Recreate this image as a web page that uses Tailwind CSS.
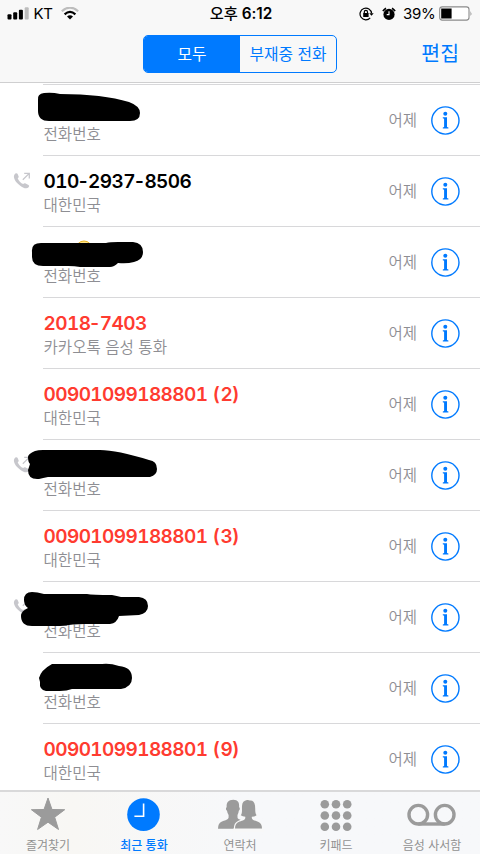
<!DOCTYPE html>
<html lang="ko">
<head>
<meta charset="utf-8">
<title>최근 통화</title>
<script src="https://cdn.jsdelivr.net/npm/@tailwindcss/browser@4"></script>
</head>
<body class="w-[480px] h-[854px] overflow-hidden bg-white font-['Inter','Noto_Sans_CJK_KR',sans-serif] text-black flex flex-col">
<header class="h-[83px] shrink-0 bg-[#f8f8f8] border-b border-[#cfcfd0]">
  <div class="h-[27px] grid grid-cols-3 items-center text-[15px] leading-[27px]">
    <div class="flex items-center pl-[7px]">
      <svg class="w-[22px] h-[13px]" viewBox="0 0 22 13"><rect x=".5" y="7.3" width="4" height="5.2" rx="1"/><rect x="6.2" y="5.3" width="4" height="7.2" rx="1"/><rect x="11.9" y="2.8" width="4" height="9.7" rx="1"/><rect x="17.7" y=".3" width="4" height="12.2" rx="1" fill="#bdbdbd"/></svg>
      <span class="ml-[4.5px] w-[20px] tracking-[-0.3px]">KT</span>
      <svg class="ml-[7px] w-[18px] h-[13px]" viewBox="0 0 18 13" fill="none"><path d="M.8 4.3Q9-3 17.2 4.3" stroke="#bdbdbd" stroke-width="2.2"/><path d="M3.6 7.3Q9 2.6 14.4 7.3" stroke="#000" stroke-width="2.2"/><path d="M6 9.5Q9 6.9 12 9.5L9 12.6Z" fill="#000"/></svg>
    </div>
    <div class="text-center font-semibold whitespace-nowrap text-[15.3px] pl-[2px]"><span class="font-medium">오후</span> 6:12</div>
    <div class="flex items-center justify-end pr-[7px]">
      <svg class="w-[15px] h-[14px]" viewBox="0 0 15 14" fill="none" stroke="#000" stroke-width="1.2"><path d="M11.2 10.8A5.8 5.8 0 1 1 12.6 6.4"/><path d="M10.3 6.2h4.4l-2.2 2.6z" fill="#000" stroke="none"/><rect x="4.2" y="6" width="5.4" height="4" fill="#000" stroke="none"/><path d="M5.3 6.2V5a1.6 1.6 0 0 1 3.2 0v1.2"/></svg>
      <svg class="ml-[8px] w-[14px] h-[14px]" viewBox="0 0 14 14"><circle cx="7" cy="7.4" r="5.6"/><path d="M.9 4.2A8 8 0 0 1 4 1.2M13.1 4.2A8 8 0 0 0 10 1.2" stroke="#000" stroke-width="1.6" fill="none"/><path d="M7 4.3v3.3H4.7" stroke="#fff" stroke-width="1.1" fill="none"/></svg>
      <span class="ml-[7px] w-[32px] tracking-[-0.3px] whitespace-nowrap">39%</span>
      <svg class="ml-[4px] w-[34px] h-[15px]" viewBox="0 0 34 15"><rect x=".7" y=".9" width="29.3" height="13.2" rx="2.6" fill="#fff" stroke="#8b8b8b" stroke-width="1.1"/><rect x="2.2" y="2.5" width="10.4" height="10"/><path d="M31.5 5q1.8 2.5 0 5z" fill="#8b8b8b"/></svg>
    </div>
  </div>
  <nav class="flex h-[55px] pt-[8px] pl-[143px] pr-[21px] justify-between text-[#007aff]">
    <div class="flex w-[194px] h-[38px] border border-[#007aff] rounded-[5px] overflow-hidden text-[15.8px] leading-[35px] text-center">
      <button class="w-[96px] bg-[#007aff] text-white">모두</button>
      <button class="flex-1 whitespace-nowrap">부재중 전화</button>
    </div>
    <button class="text-[20.5px] h-[38px] leading-[38px]">편집</button>
  </nav>
</header>
<main id="calls" class="h-[707px] shrink-0 overflow-hidden pt-[1px]"><div class="ml-[43px] h-px bg-[#d8d8da]"></div></main>
<footer class="h-[64px] shrink-0 grid grid-cols-5 bg-linear-to-r from-[#f8f8f8] via-[#f8f7f4] via-15% to-[#f7f8fa] to-50% border-t-2 border-[#d9d9da] text-[#929292] text-[12px] text-center">
  <div class="flex flex-col items-center"><svg class="w-[40px] h-[45px]" viewBox="0 0 40 45" fill="#9b9b9b" stroke="#9b9b9b" stroke-width="1" stroke-linejoin="round"><path d="M20 6l4 11.500 12.700.2-10 7.500 3.800 12.300L20 30.200 9.600 37.500l3.800-12.300-10-7.500 12.600-.2z"/></svg><span class="leading-[18px]">즐겨찾기</span></div>
  <div class="flex flex-col items-center text-[#007aff] font-medium"><svg class="w-[40px] h-[45px]" viewBox="0 0 40 45"><circle cx="19.500" cy="22.600" r="16.300" fill="#007aff"/><path d="M19.600 11.500V24.300H10.400" fill="none" stroke="#fff" stroke-width="1.600"/></svg><span class="leading-[18px]">최근 통화</span></div>
  <div class="flex flex-col items-center"><svg class="w-[48px] h-[45px]" viewBox="0 0 48 45" fill="#9b9b9b"><path d="M2 36.700H29V29C25 28 21.800 27.300 21.500 25.500V23Q22.600 21 22.800 18.800C24 18.300 24.200 15.500 23.100 15.200C23.500 10.500 22 7.700 17.300 7.700C12.300 7.700 10.300 10.500 10.700 15.200C9.500 15.500 9.800 18.300 11 18.800Q11.300 21 12.600 23V25.500C12.300 28 8.500 28.300 5.500 29.700Q2 31.200 2 36.700Z"/><path d="M19 36.700H46Q46 31.500 42.500 30C39.500 28.800 36 28.300 35.800 26V24.700Q39 24.600 40.500 23.300C38.700 20.700 39.500 17.500 39 13.500Q38 8 33.800 8.600Q32.800 7.800 31 8.100Q26.300 8.800 26 14C25.800 18 26.500 20.700 24.800 23.300Q26.500 24.600 29.300 24.700V26C29 28.300 25.500 28.800 22.500 30Q19 31.500 19 36.700Z" stroke="#f8f8f8" stroke-width="2.400" paint-order="stroke"/><path d="M17 36.700H48V40H17Z" fill="#f8f8f8"/></svg><span class="leading-[18px]">연락처</span></div>
  <div class="flex flex-col items-center"><svg class="w-[40px] h-[45px]" viewBox="0 0 40 45" fill="#9b9b9b"><circle cx="8.800" cy="12.200" r="4.300"/><circle cx="20" cy="12.200" r="4.300"/><circle cx="31.200" cy="12.200" r="4.300"/><circle cx="8.800" cy="23.500" r="4.300"/><circle cx="20" cy="23.500" r="4.300"/><circle cx="31.200" cy="23.500" r="4.300"/><circle cx="8.800" cy="34.700" r="4.300"/><circle cx="20" cy="34.700" r="4.300"/><circle cx="31.200" cy="34.700" r="4.300"/></svg><span class="leading-[18px]">키패드</span></div>
  <div class="flex flex-col items-center"><svg class="w-[50px] h-[45px]" viewBox="0 0 50 45" fill="none" stroke="#9b9b9b" stroke-width="3.400"><circle cx="11.300" cy="22.700" r="9.300"/><circle cx="37.700" cy="22.700" r="9.300"/><path d="M11.300 32h26.400"/></svg><span class="leading-[18px]">음성 사서함</span></div>
</footer>
<script>
// mask: ink outline in row coordinates, drawn over the caller name
const rows = [
  {sub:'전화번호', mask:'M38 15Q37 9 44 8Q52 7 60 9Q103 9 129 17Q140 21 140 28Q140 36 130 36H49Q38 36 38 26Z'},
  {name:'010-2937-8506', sub:'대한민국', out:1},
  {sub:'전화번호', emoji:1, mask:'M32 25Q31 16 41 16H106Q110 15 118 15H133Q143 16 143 25Q143 33 134 35Q127 37 118 36Q114 40 110 40H80Q75 39 68 39H43Q32 39 32 30Z'},
  {name:'2018-7403', sub:'카카오톡 음성 통화', red:1},
  {name:'00901099188801 (2)', sub:'대한민국', red:1},
  {sub:'전화번호', out:1, mask:'M28 17Q28 14 35 11Q38 10 43 10H100Q117 10 149 20Q157 21 157 29Q157 35 150 37H85Q80 37 75 37H48Q43 38 39 39Q28 40 28 30L30 24Q28 22 28 17Z'},
  {name:'00901099188801 (3)', sub:'대한민국', red:1},
  {sub:'전화번호', out:1, mask:'M24 18Q24 10 32 10Q37 10 44 12H87Q92 13 112 13Q117 14 121 15H139Q148 16 148 24Q148 31 139 33L119 34Q117 41 110 42H84Q74 42 60 44H32Q21 44 21 34Q21 29 28 26Q24 23 24 18Z'},
  {sub:'전화번호', mask:'M39 25Q41 17 52 11H102Q110 10 119 13Q132 14 132 25Q132 34 121 36L72 36Q67 38 60 38H46Q39 37 40 29Z'},
  {name:'00901099188801 (9)', sub:'대한민국', red:1}
];
// digits share one advance width; hyphens and brackets keep their own
const number = s => s.replace(/\d+/g, d => `<span class="tabular-nums tracking-[-0.58px]">${d}</span>`);
const phone = `<svg class="absolute left-[13px] top-[16px] w-[18px] h-[17px]" viewBox="0 0 18 17"><path d="M1.500 2.500C2.400 1 3.800.9 4.500 1.700L5.700 4.600Q5.900 5.500 4.700 6.300C5.400 8.600 8 11.300 10.200 12.100Q11.300 10.900 12.100 11.300L15.500 12.900Q16.900 13.800 15.600 15.200C14.500 16.500 12.500 16.700 10 15.400C5.300 13 1.500 9 .9 5Q.8 3.500 1.500 2.500Z" fill="#c7c7cc"/><path d="M9.800 7.800L16 1.600M11.200 1.400H16.300V6.500" fill="none" stroke="#c7c7cc" stroke-width="1.300"/></svg>`;
document.getElementById('calls').insertAdjacentHTML('beforeend', rows.map(r => `
<article class="relative h-[71px] pl-[43px]">
  ${r.out ? phone : ''}
  <div class="h-[71px] border-b border-[#d8d8da] flex pr-[20px]">
    <div class="flex-1 pt-[14px] pl-[0.5px]">
      <div class="h-[23px] leading-[23px] text-[19px] font-semibold tracking-[0.6px] whitespace-nowrap ${r.red ? 'text-[#ff3b30]' : 'text-black'}">${number(r.name || '')}</div>
      <div class="h-[23px] leading-[25px] text-[15.600px] font-[350] text-[#8e8e93] whitespace-nowrap">${r.sub}</div>
    </div>
    <div class="pt-[24px] leading-[23px] text-[15.500px] font-[350] text-[#8e8e93]">어제</div>
    <svg class="ml-[13px] mt-[21px] w-[30px] h-[30px]" viewBox="0 0 30 30"><circle cx="15.400" cy="14.500" r="13.600" fill="none" stroke="#007aff" stroke-width="1.400"/><circle cx="15.300" cy="7.700" r="2" fill="#007aff"/><path d="M12.800 11.300H17V21L18.400 21.500V22.500H12.800V21.500L14.100 21V12.700L12.800 12.300Z" fill="#007aff"/></svg>
  </div>
  ${r.mask ? `<svg class="absolute left-0 top-0 w-[170px] h-[50px]" viewBox="0 0 170 50">${r.emoji ? '<circle cx="84" cy="22" r="8" fill="#ffe58a" stroke="#e8b320"/>' : ''}<path d="${r.mask}"/></svg>` : ''}
</article>`).join(''));
</script>
</body>
</html>
